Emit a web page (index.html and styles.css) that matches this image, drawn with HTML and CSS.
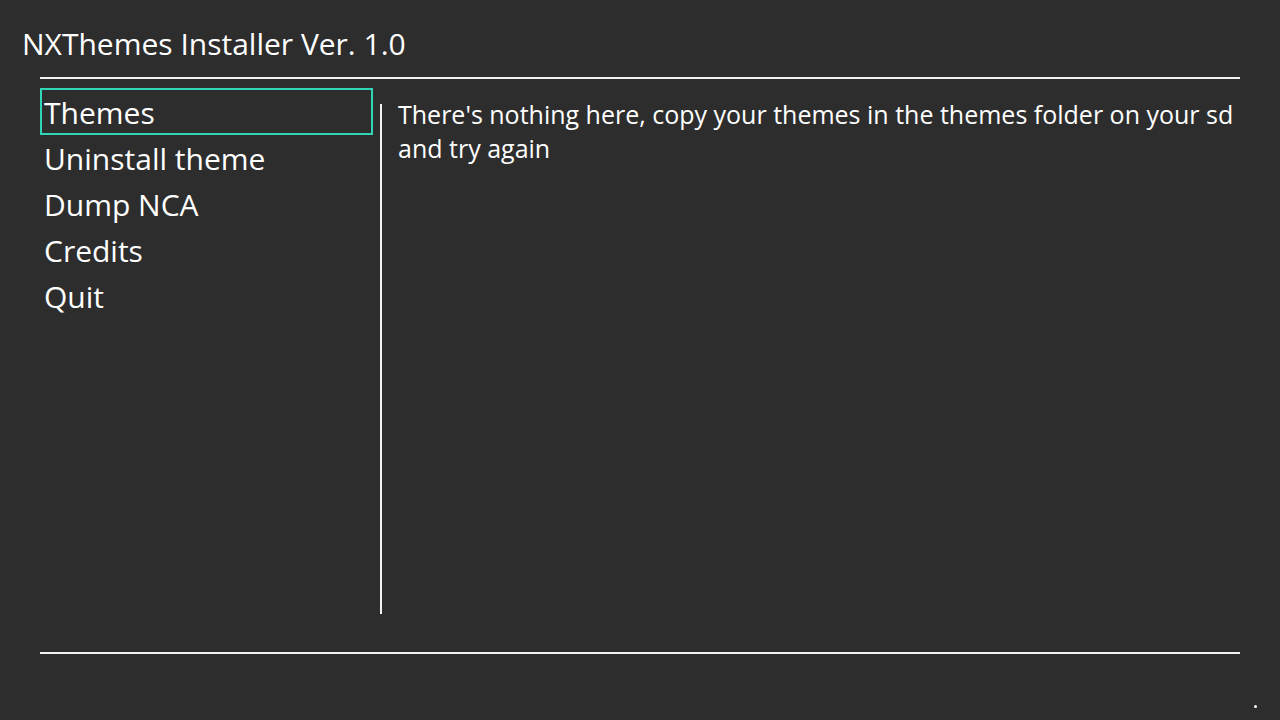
FILE: index.html
```html
<!DOCTYPE html>
<html lang="en">
<head>
    <meta charset="UTF-8">
    <title>NXThemes Installer</title>
    <link rel="stylesheet" href="styles.css">
</head>
<body>
    <div class="screen">
        <!-- header -->
        <div class="title">NXThemes Installer Ver. 1.0</div>
        <div class="rule"></div>

        <!-- main area: menu + message -->
        <div class="content">
            <ul class="menu">
                <li class="selected">Themes</li>
                <li>Uninstall theme</li>
                <li>Dump NCA</li>
                <li>Credits</li>
                <li>Quit</li>
            </ul>
            <div class="divider"></div>
            <div class="message">There's nothing here, copy your themes in the themes folder on your sd and try again</div>
        </div>

        <div class="rule"></div>
        <span class="dot"></span>
    </div>
</body>
</html>
```

FILE: styles.css
```css
* {
    margin: 0;
    padding: 0;
    box-sizing: border-box;
}

body {
    background: #2d2d2d;
    color: #ffffff;
    font-family: 'Open Sans', sans-serif;
}

.screen {
    position: relative;
    width: 1280px;
    height: 720px;
}

.title {
    height: 77px;
    padding: 27px 0 0 22px;
    font-size: 30px;
    line-height: 34px;
}

.rule {
    height: 2px;
    margin: 0 40px;
    background: #f2f2f2;
}

.content {
    display: flex;
    height: 573px;
    padding-left: 40px;
}

.menu {
    list-style: none;
    width: 333px;
    margin-top: 9px;
}

.menu li {
    height: 46px;
    padding: 1px 0 0 2px;
    border: 2px solid transparent;
    font-size: 30px;
    line-height: 44px;
}

.menu li.selected {
    height: 47px;
    margin-bottom: -1px;
    border-color: #30d5b5;
}

.divider {
    width: 2px;
    height: 510px;
    margin: 25px 0 0 7px;
    background: #f2f2f2;
}

.message {
    flex: 1;
    margin-top: 18px;
    padding: 0 30px 0 16px;
    font-size: 25px;
    line-height: 34px;
}

.dot {
    position: absolute;
    left: 1254px;
    top: 705px;
    width: 3px;
    height: 3px;
    border-radius: 50%;
    background: #ffffff;
}
```
